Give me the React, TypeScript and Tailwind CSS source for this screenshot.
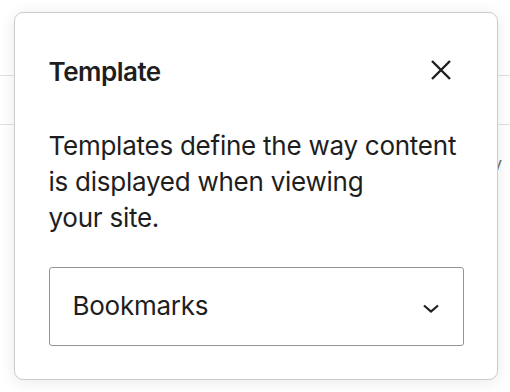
export default function App() {
  return (
    <div className="relative w-[510px] h-[392px] overflow-hidden bg-white font-['Inter',sans-serif] text-[#1e1e1e]">
      {/* Background editor rows peeking out around the popover */}
      <div className="pt-[75px]">
        <div className="h-[50px] border-y border-[#e0e0e0]" />
        <div className="flex justify-end pr-[8px] pt-[25px] text-[18px] text-[#757575]">
          <span>y</span>
        </div>
      </div>

      {/* Popover */}
      <div className="absolute left-[14px] top-[12px] w-[484px] h-[368px] rounded-[9px] border-[1.5px] border-[#cccccc] bg-white shadow-[0_2px_16px_rgba(0,0,0,0.09)] px-[33.5px] pt-[41px]">
        <div className="flex items-center justify-between h-[36px]">
          <h2 className="text-[26px] leading-[36px] font-semibold tracking-[-0.5px]">Template</h2>
          <button className="w-[30px] h-[30px] flex items-center justify-center mr-[8px] mb-[4px]">
            <svg width="20" height="20" viewBox="0 0 20 20" fill="none">
              <path d="M1 1L19 19M19 1L1 19" stroke="#1e1e1e" strokeWidth="2.4" />
            </svg>
          </button>
        </div>

        <p className="mt-[37.5px] text-[26px] leading-[36px] tracking-[-0.25px]">
          Templates define the way content
          <br />
          is displayed when viewing
          <br />
          your site.
        </p>

        <div className="mt-[31px] h-[79px] rounded-[3px] border-[1.5px] border-[#949494] flex items-center justify-between pl-[23px] pr-[23.5px]">
          <span className="text-[26px] leading-[36px] tracking-[-0.25px]">Bookmarks</span>
          <svg className="mt-[5px]" width="16" height="10" viewBox="0 0 16 10" fill="none">
            <path d="M1 1.5L8 7.5L15 1.5" stroke="#1e1e1e" strokeWidth="2.2" />
          </svg>
        </div>
      </div>
    </div>
  );
}
